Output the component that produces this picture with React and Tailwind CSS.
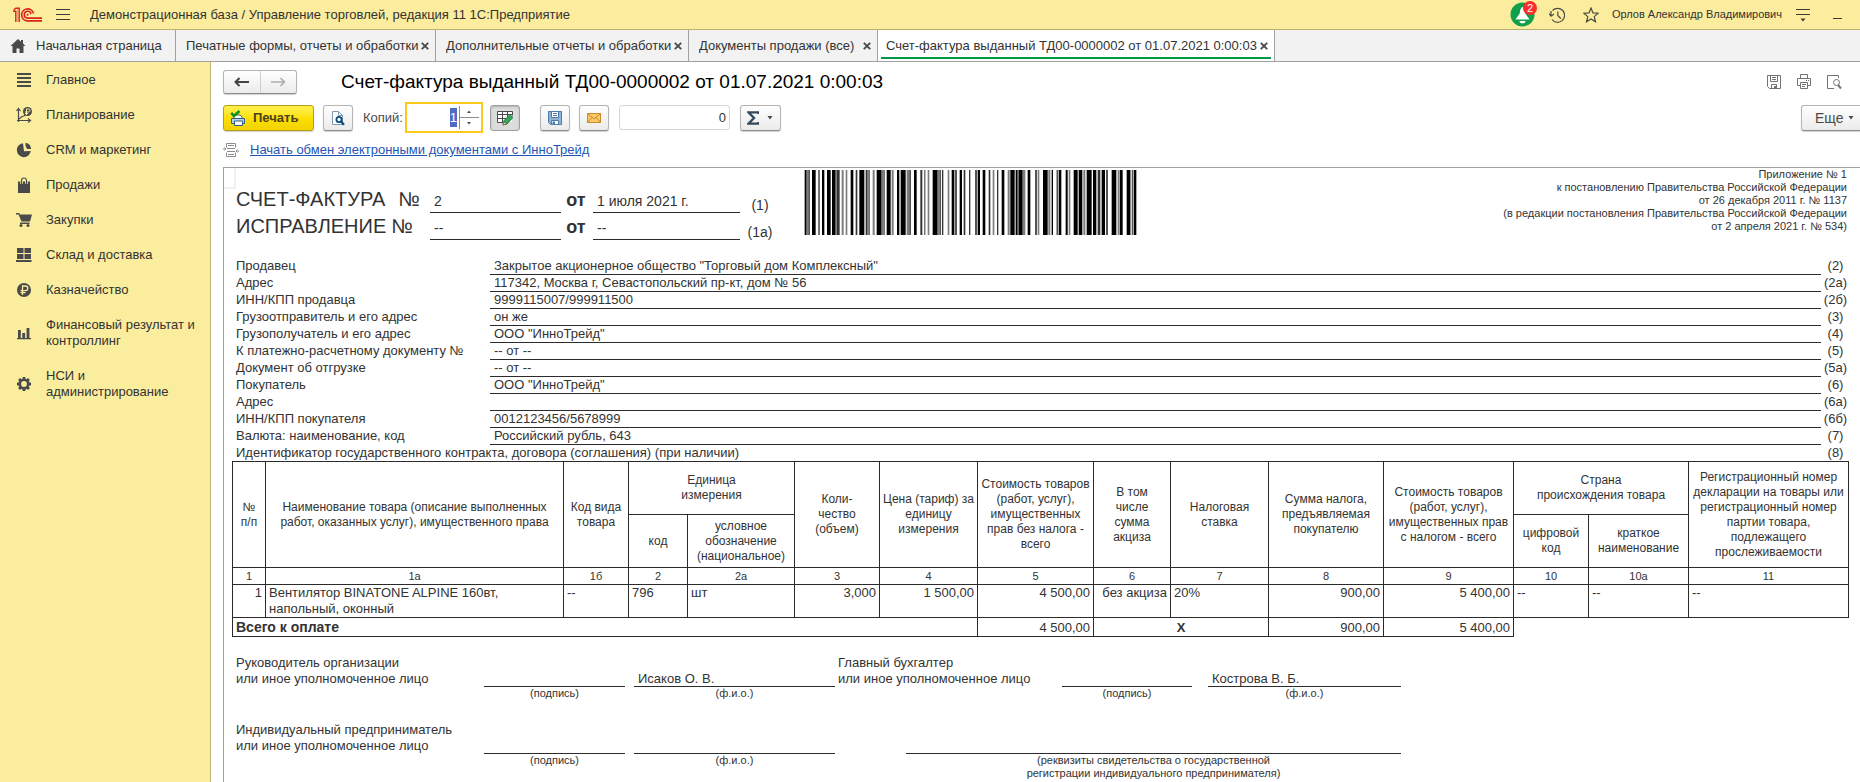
import { useEffect, useRef } from "react";

const TABS = [
  { title: "Печатные формы, отчеты и обработки", width: "w-[260px]" },
  { title: "Дополнительные отчеты и обработки", width: "w-[253px]" },
  { title: "Документы продажи (все)", width: "w-[189px]" },
  { title: "Счет-фактура выданный ТД00-0000002 от 01.07.2021 0:00:03", width: "w-[397px]", active: true },
];

const G = "#4a4a4a";

const SECTIONS = [
  {
    title: "Главное",
    icon: <path d="M1 1h14v2H1zM1 5h14v2H1zM1 9h14v2H1zM1 13h14v2H1z" fill={G} />,
  },
  {
    title: "Планирование",
    icon: (
      <g fill="none" stroke={G}>
        <path d="M2.500 15V2M0.500 4l2-2.500 2 2.500M1 13.500h13M12 11.500l2.500 2-2.500 2" strokeWidth="1.200" />
        <path d="M3 12l3-2.500 2-.500 2-2" strokeWidth="1.200" />
        <circle cx="11.500" cy="4.500" r="4.500" fill={G} stroke="none" />
        <path d="M10.500 8V2h2a1.400 1.400 0 0 1 0 3H9M9 6.500h3" stroke="#fbed9e" strokeWidth="1" />
      </g>
    ),
  },
  {
    title: "CRM и маркетинг",
    icon: (
      <g fill={G}>
        <path d="M7 1.200A7 7 0 1 0 14.800 9L8 9.200z" />
        <path d="M9.500 0.800v3l1.500 3.200h4A6.500 6.500 0 0 0 9.500 .8z" />
      </g>
    ),
  },
  {
    title: "Продажи",
    icon: (
      <g>
        <path d="M2 4.500h12V16H2z" fill={G} />
        <path d="M5.500 7V3.500a2.500 2.500 0 0 1 5 0V7" fill="none" stroke="#fbed9e" strokeWidth="2.600" />
        <path d="M5.500 7V3.500a2.500 2.500 0 0 1 5 0V7" fill="none" stroke={G} strokeWidth="1.100" />
      </g>
    ),
  },
  {
    title: "Закупки",
    icon: (
      <g fill={G}>
        <path d="M0 1h3.200l.6 1.500H16l-2 7H5.500L2.500 2.500H0z" />
        <path d="M4 10.500h9.500v1.500H4z" />
        <circle cx="5" cy="13.500" r="1.500" />
        <circle cx="12" cy="13.500" r="1.500" />
      </g>
    ),
  },
  {
    title: "Склад и доставка",
    icon: <path d="M1 1h6.500v5H1zM8.500 1H15v5H8.500zM1 7h6.500v5H1zM8.500 7H15v5H8.500zM0 13h15.500v2H0z" fill={G} />,
  },
  {
    title: "Казначейство",
    icon: (
      <g>
        <circle cx="8" cy="8" r="7" fill={G} />
        <path d="M6.500 13V4h3a2.200 2.200 0 0 1 0 4.600H4.500M4.500 10.700H9.500" fill="none" stroke="#fbed9e" strokeWidth="1.300" />
      </g>
    ),
  },
  {
    title: "Финансовый результат и контроллинг",
    icon: <path d="M1 13h14v1.300H1zM2 5h2.800v8H2zM6.300 8h2.800v5H6.300zM10.600 3h2.800v10h-2.800z" fill={G} />,
  },
  {
    title: "НСИ и администрирование",
    icon: (
      <g>
        <circle cx="8" cy="8" r="4.200" fill="none" stroke={G} strokeWidth="2.600" />
        <path
          d="M8 1v2.500M8 12.500V15M1 8h2.500M12.500 8H15M3.050 3.050l1.800 1.800M11.150 11.150l1.800 1.800M3.050 12.950l1.800-1.800M11.150 4.850l1.800-1.800"
          stroke={G}
          strokeWidth="2.800"
        />
      </g>
    ),
  },
];

const PARTIES = [
  ["Продавец", 'Закрытое акционерное общество "Торговый дом Комплексный"', "(2)"],
  ["Адрес", "117342, Москва г, Севастопольский пр-кт, дом № 56", "(2а)"],
  ["ИНН/КПП продавца", "9999115007/999911500", "(2б)"],
  ["Грузоотправитель и его адрес", "он же", "(3)"],
  ["Грузополучатель и его адрес", 'ООО "ИнноТрейд"', "(4)"],
  ["К платежно-расчетному документу №", "-- от --", "(5)"],
  ["Документ об отгрузке", "-- от --", "(5а)"],
  ["Покупатель", 'ООО "ИнноТрейд"', "(6)"],
  ["Адрес", "", "(6а)"],
  ["ИНН/КПП покупателя", "0012123456/5678999", "(6б)"],
  ["Валюта: наименование, код", "Российский рубль, 643", "(7)"],
];

const COLUMNS = [33, 298, 65, 59, 107, 85, 98, 116, 77, 98, 115, 130, 75, 100, 160];
const COLUMN_NUMBERS = ["1", "1а", "1б", "2", "2а", "3", "4", "5", "6", "7", "8", "9", "10", "10а", "11"];

const ITEM = [
  ["1", "text-right"],
  ["Вентилятор BINATONE ALPINE 160вт,\nнапольный, оконный", "text-left"],
  ["--", "text-left"],
  ["796", "text-left"],
  ["шт", "text-left"],
  ["3,000", "text-right"],
  ["1 500,00", "text-right"],
  ["4 500,00", "text-right"],
  ["без акциза", "text-right"],
  ["20%", "text-left"],
  ["900,00", "text-right"],
  ["5 400,00", "text-right"],
  ["--", "text-left"],
  ["--", "text-left"],
  ["--", "text-left"],
];

// [offset, width, shade] where shade 0 is black, 1 dark grey, 2 mid grey
const BARS = [
  [2, 6, 0], [8, 6, 2], [14, 3, 0], [24, 11, 0], [43, 4, 1], [54, 7, 0], [69, 11, 0], [84, 11, 0], [95, 4, 2], [99, 8, 1],
  [113, 6, 2], [125, 5, 2], [140, 8, 0], [155, 5, 1], [166, 15, 0], [185, 4, 1], [189, 5, 2], [194, 3, 1], [206, 6, 2],
  [218, 15, 0], [233, 7, 2], [240, 2, 1], [248, 12, 0], [263, 6, 2], [279, 7, 0], [290, 15, 0], [308, 9, 2], [317, 3, 0],
  [330, 8, 0], [349, 6, 1], [361, 3, 1], [371, 5, 2], [386, 15, 0], [401, 7, 2], [408, 2, 0], [414, 4, 1], [431, 5, 2],
  [443, 8, 0], [454, 4, 0], [467, 7, 0], [479, 5, 1], [495, 4, 1], [514, 4, 0], [521, 7, 0], [536, 8, 0], [554, 5, 1],
  [566, 5, 2], [579, 4, 1], [593, 8, 0], [611, 6, 2], [619, 13, 0], [635, 6, 0], [641, 3, 2], [644, 12, 0], [657, 7, 2],
  [671, 8, 0], [694, 4, 0], [701, 5, 2], [717, 14, 0], [733, 6, 2], [743, 4, 0], [758, 3, 0], [764, 8, 0], [785, 6, 0],
  [794, 5, 2], [809, 12, 0], [824, 11, 0], [838, 6, 2], [848, 15, 0], [867, 10, 0], [881, 8, 1], [893, 10, 0], [907, 4, 0],
  [923, 14, 0], [941, 6, 2], [948, 8, 0], [968, 11, 0], [979, 3, 2], [984, 2, 0], [989, 8, 0],
];
const SHADES = ["#000000", "#333333", "#7d7d7d"];

function Icon({ size = 16, box = 16, className = "", children }) {
  return (
    <svg width={size} height={size} viewBox={`0 0 ${box} ${box}`} className={`shrink-0 ${className}`} aria-hidden="true">
      {children}
    </svg>
  );
}

function TopBar() {
  return (
    <header className="flex h-[30px] shrink-0 items-center border-b border-[#b9b070] bg-[#fbec9e] pl-[13px] pr-[17px]">
      <svg width="30" height="16" viewBox="0 0 30 16" fill="none" stroke="#d9231d" className="shrink-0" aria-label="1С">
        <path d="M0 4.200H2.800V15M6.200 15V1.200H2.800L.8 3" strokeWidth="1.400" />
        <path d="M4.500 15V2.500" strokeWidth="1" opacity=".35" />
        <path d="M20.500 6.500A6 6 0 1 0 14.500 13.900H29" strokeWidth="1.600" />
        <path d="M18 7.200A3.400 3.400 0 1 0 14.500 11.100H29" strokeWidth="1.600" />
        <circle cx="14.600" cy="7.800" r="1" fill="#d9231d" stroke="none" />
      </svg>
      <button type="button" aria-label="Меню" className="ml-[13px] shrink-0">
        <svg width="15" height="11" viewBox="0 0 15 11" stroke="#3a3a3a" aria-hidden="true" className="block">
          <path d="M0 .5h14M0 5.500h14M0 10.500h14" />
        </svg>
      </button>
      <span className="ml-[19px] truncate text-[13px]">
        Демонстрационная база / Управление торговлей, редакция 11 1С:Предприятие
      </span>
      <div className="ml-auto flex shrink-0 items-center">
        <button type="button" aria-label="Уведомления: 2" className="relative">
          <Icon size={25} box={25}>
            <circle cx="12.500" cy="12.500" r="12" fill="#10a04c" />
            <path d="M12.500 5c-2 .5-2.300 3-2.800 6.500L5.500 17.500h14l-4.200-6C14.800 8 14.500 5.500 12.500 5z" fill="#fff" />
            <path d="M9.500 19h6a3 2.300 0 0 1-6 0z" fill="#fff" />
          </Icon>
          <span className="absolute -top-px left-[13px] flex h-[14px] w-[14px] items-center justify-center rounded-full bg-[#fb2c2c] text-[11px] leading-none text-white">
            2
          </span>
        </button>
        <button type="button" aria-label="История" className="ml-[14px]">
          <Icon>
            <g fill="none" stroke="#4a4a40" strokeWidth="1.200">
              <path d="M3.500 3.500A7 7 0 1 1 3 12.500" />
              <path d="M2 9L2 4M0 6.500L2 9.200 5 7M8.800 4.500v4l3 3" />
            </g>
          </Icon>
        </button>
        <button type="button" aria-label="Избранное" className="ml-[18px]">
          <Icon>
            <path d="M8 1l2 4.900 5.200.3-4 3.400 1.300 5.200L8 12l-4.500 2.800 1.300-5.200-4-3.400L6 5.900z" fill="none" stroke="#4a4a40" strokeWidth="1.200" />
          </Icon>
        </button>
        <span className="ml-[13px] text-[11px]">Орлов Александр Владимирович</span>
        <button type="button" aria-label="Сервис" className="ml-[14px]">
          <Icon size={15} box={15}>
            <path d="M0 2.500h14M0 7.500h14" stroke="#3a3a3a" />
            <path d="M4.500 11.500h5L7 14.500z" fill="#3a3a3a" />
          </Icon>
        </button>
        <button type="button" aria-label="Свернуть" className="ml-[22px]">
          <svg width="10" height="9" viewBox="0 0 10 9" aria-hidden="true">
            <path d="M0 8.500h9" stroke="#3a3a3a" />
          </svg>
        </button>
      </div>
    </header>
  );
}

function TabStrip() {
  return (
    <nav className="flex h-8 shrink-0 border-b border-[#a0a0a0] bg-[#f2f2f2]">
      <a href="#home" className="flex w-[176px] items-center gap-[10px] border-r border-[#a0a0a0] pl-[10px]">
        <Icon>
          <path d="M8 1L.5 8h2v7H6.500v-4.500h3V15h4V8h2L13 5.600V2h-2v1.700z" fill="#4a4a4a" />
        </Icon>
        <span className="text-[13px]">Начальная страница</span>
      </a>
      {TABS.map((tab) => (
        <div
          key={tab.title}
          className={`flex shrink-0 flex-col border-r border-[#a0a0a0] ${tab.width} ${tab.active ? "bg-white" : ""}`}
        >
          <div className={`flex flex-1 items-center justify-between pr-[6px] ${tab.active ? "pl-2 pt-1" : "pl-[10px]"}`}>
            <a href="#tab" className="truncate text-[13px]">{tab.title}</a>
            <button type="button" aria-label="Закрыть" className="shrink-0">
              <svg width="8" height="8" viewBox="0 0 8 8" aria-hidden="true">
                <path d="M.8.8l6.400 6.400M7.200.8L.8 7.200" stroke="#4a4a4a" strokeWidth="1.900" />
              </svg>
            </button>
          </div>
          {tab.active && <div className="mx-[3px] mb-[2px] h-[2px] bg-[#009a45]" />}
        </div>
      ))}
    </nav>
  );
}

function Sidebar() {
  return (
    <aside className="w-[211px] shrink-0 border-r border-[#c4b878] bg-[#fbed9e]">
      <ul>
        {SECTIONS.map((section) => (
          <li key={section.title}>
            <a href="#section" className="flex items-center gap-[14px] pb-[9px] pl-4 pr-[10px] pt-[10px] text-[13px] leading-4">
              <Icon>{section.icon}</Icon>
              <span>{section.title}</span>
            </a>
          </li>
        ))}
      </ul>
    </aside>
  );
}

const BTN =
  "flex shrink-0 items-center justify-center rounded-[3px] border border-[#b4b4b4] border-b-[#8c8c8c] bg-linear-to-b from-white to-[#ebebeb] shadow-[0_1px_1px_#d0d0d0]";

function CopiesInput() {
  const ref = useRef(null);
  useEffect(() => {
    ref.current.focus();
    ref.current.select();
  }, []);
  return (
    <div className="flex h-[31px] w-[78px] border-2 border-[#fbc81e] bg-white">
      <input
        id="copies"
        ref={ref}
        defaultValue="1"
        className="min-w-0 flex-1 pr-[2px] text-right text-[13px] outline-none selection:bg-[#4f6bc4] selection:text-white"
      />
      <div className="my-[2px] mr-[2px] flex w-5 flex-col border-l border-[#8c8c8c]">
        <button type="button" aria-label="Увеличить" className="flex flex-1 items-center justify-center border-b border-[#8c8c8c]">
          <svg width="4" height="3" viewBox="0 0 4 3" aria-hidden="true"><path d="M0 3L2 .5 4 3z" fill="#4a4a4a" /></svg>
        </button>
        <button type="button" aria-label="Уменьшить" className="flex flex-1 items-center justify-center">
          <svg width="4" height="3" viewBox="0 0 4 3" aria-hidden="true"><path d="M0 0L2 2.500 4 0z" fill="#4a4a4a" /></svg>
        </button>
      </div>
    </div>
  );
}

function Caret() {
  return (
    <svg width="6" height="4" viewBox="0 0 6 4" aria-hidden="true">
      <path d="M.5 0h5L3 3.500z" fill="#4a4a4a" />
    </svg>
  );
}

function FormHeader() {
  return (
    <div className="flex items-center pt-2">
      <div className={`${BTN} h-6 w-[74px]`}>
        <button type="button" aria-label="Назад" className="flex h-full flex-1 items-center justify-center border-r border-[#cfcfcf]">
          <svg width="15" height="10" viewBox="0 0 15 10" aria-hidden="true">
            <path d="M5.500 1L1.500 5l4 4M1.500 5H15" fill="none" stroke="#444" strokeWidth="2" />
          </svg>
        </button>
        <button type="button" aria-label="Вперед" className="flex h-full flex-1 items-center justify-center">
          <svg width="15" height="10" viewBox="0 0 15 10" aria-hidden="true">
            <path d="M9.500 1l4 4-4 4M13.500 5H0" fill="none" stroke="#adadad" strokeWidth="1.600" />
          </svg>
        </button>
      </div>
      <h1 className="ml-11 text-[19px] leading-6 text-black">Счет-фактура выданный ТД00-0000002 от 01.07.2021 0:00:03</h1>
      <div className="ml-auto flex shrink-0 gap-[14px] pr-[18px]">
        <button type="button" aria-label="Сохранить">
          <Icon>
            <path d="M1.500 1.500h13v13H3.500l-2-2zM4.500 1.500v6h7v-6M6 3.500h4M6 5.500h4M5.500 14.500v-4h5v4" fill="none" stroke="#737373" />
            <path d="M8 12h2.500v2.500H8z" fill="#737373" />
          </Icon>
        </button>
        <button type="button" aria-label="Печать">
          <Icon>
            <path d="M4.500 4.500V.5h7v4M4.500 11.500H1.500v-7h13v7h-3M4.500 8.500h7v6h-7zM6 10.500h4M6 12.500h3M10 6.500h1M12 6.500h1" fill="none" stroke="#737373" />
          </Icon>
        </button>
        <button type="button" aria-label="Просмотр">
          <Icon>
            <path d="M12.500 4V1.500h-11v13H8" fill="none" stroke="#737373" />
            <circle cx="10.500" cy="8.500" r="3" fill="none" stroke="#737373" />
            <path d="M12 11l3 3.500" stroke="#737373" strokeWidth="2" />
          </Icon>
        </button>
      </div>
    </div>
  );
}

function Toolbar() {
  return (
    <div className="flex items-center pt-2">
      <button
        type="button"
        className="flex h-[26px] w-[91px] shrink-0 items-center gap-[7px] rounded-[3px] border border-[#b79d10] bg-linear-to-b from-[#fff04a] via-[#fde000] to-[#f2d200] pl-[6px] text-[13px] font-bold text-[#4a4020] shadow-[0_1px_1px_#d0d0d0]"
      >
        <Icon>
          <path d="M4 8V5h6l2 2v3" fill="#fff" stroke="#2f6a94" />
          <path d="M1.500 8.500h13v5h-13z" fill="#b9cfdf" stroke="#2f5f85" />
          <path d="M4.500 11h8v4.500h-8z" fill="#fff" stroke="#2f5f85" />
          <path d="M1.200 2.800L4 6l5.500-5" fill="none" stroke="#0f8f1f" strokeWidth="2.600" />
        </Icon>
        Печать
      </button>
      <button type="button" aria-label="Предварительный просмотр" className={`${BTN} ml-[9px] h-[26px] w-[30px]`}>
        <Icon>
          <path d="M2.500 1.500h6l4 4v9h-10z" fill="#fff" stroke="#7d9ab5" />
          <path d="M8.500 1.500v4h4" fill="none" stroke="#7d9ab5" />
          <circle cx="9" cy="9.500" r="2.600" fill="#fff" stroke="#0f4b7a" strokeWidth="1.800" />
          <path d="M11 11.500l3 3.300" stroke="#0f4b7a" strokeWidth="2.400" />
        </Icon>
      </button>
      <label htmlFor="copies" className="ml-[10px] mr-[2px] text-[13px] text-[#4a4a4a]">Копий:</label>
      <CopiesInput />
      <button type="button" aria-label="Редактирование" className="ml-[7px] flex h-[26px] w-[30px] shrink-0 items-center justify-center rounded-[3px] border border-[#a0a0a0] bg-[#dcdcdc] shadow-[inset_0_1px_2px_#b0b0b0]">
        <Icon>
          <path d="M1 2h14v10H1z" fill="#fff" />
          <path d="M.5 1.500h15M.5 4.500h15M.5 8.500h9M.5 12.500h7M.5 1.500v11M5.500 1.500v11M10.500 1.500v6M15.500 1.500v4" fill="none" stroke="#4a4a4a" />
          <path d="M6 15l1-4.500L13 4.500l3 3L10 14z" fill="#35a35a" stroke="#1d6b38" strokeWidth=".8" />
          <path d="M6 15l.8-3.300L9.300 14z" fill="#f6d9a0" stroke="#6b4a1d" strokeWidth=".5" />
        </Icon>
      </button>
      <button type="button" aria-label="Сохранить как" className={`${BTN} ml-5 h-[26px] w-[30px]`}>
        <Icon>
          <path d="M1.500 1.500h13v13h-11l-2-2z" fill="#8fb4d6" stroke="#4d7ca8" />
          <path d="M4.500 1.500h7v6h-7z" fill="#fff" stroke="#4d7ca8" />
          <path d="M6 3.500h4M6 5.500h4" stroke="#4d7ca8" />
          <path d="M4.500 10.500h7v4h-7z" fill="#fff" stroke="#4d7ca8" />
          <path d="M5.500 11.500H8v3H5.500z" fill="#4d7ca8" />
        </Icon>
      </button>
      <button type="button" aria-label="Отправить" className={`${BTN} ml-[9px] h-[26px] w-[30px]`}>
        <Icon>
          <path d="M1.500 3.500h13v9h-13z" fill="#fbc968" stroke="#c98a2c" />
          <path d="M1.500 3.500L8 9l6.500-5.500M1.500 12.500L6 7.500M14.500 12.500L10 7.500" fill="none" stroke="#c98a2c" />
        </Icon>
      </button>
      <input
        aria-label="Сумма"
        defaultValue="0"
        className="ml-[10px] h-[25px] w-[111px] rounded-[3px] border border-[#d6d6d6] pr-[3px] text-right text-[13px]"
      />
      <button type="button" aria-label="Вычислить" className={`${BTN} ml-[10px] h-[26px] w-[41px] gap-[8px]`}>
        <svg width="12" height="14" viewBox="0 0 12 14" aria-hidden="true">
          <path d="M11.500 3V1.300H1.500L7 7l-5.500 5.700h10V11" fill="none" stroke="#34495c" strokeWidth="2.300" />
        </svg>
        <Caret />
      </button>
      <button
        type="button"
        className="ml-auto flex h-[26px] w-[59px] shrink-0 items-center gap-1 rounded-l-[3px] border border-r-0 border-[#b4b4b4] border-b-[#8c8c8c] bg-linear-to-b from-white to-[#ebebeb] pl-[13px] text-sm text-[#4a4a4a] shadow-[0_1px_1px_#d0d0d0]"
      >
        Еще
        <Caret />
      </button>
    </div>
  );
}

function InvoiceTitle() {
  const rows = [
    { name: "СЧЕТ-ФАКТУРА", gap: "gap-[13px]", number: "2", date: "1 июля 2021 г.", mark: "(1)", h: "h-[45px]" },
    { name: "ИСПРАВЛЕНИЕ", gap: "gap-[5px]", number: "--", date: "--", mark: "(1а)", h: "h-[27px]" },
  ];
  return (
    <div className="w-[580px] shrink-0 pl-3">
      {rows.map((row) => (
        <div key={row.name} className={`flex items-end ${row.h}`}>
          <div className={`flex w-[194px] pb-[2px] text-[20px] leading-6 ${row.gap}`}>
            <span>{row.name}</span>
            <span>№</span>
          </div>
          <div className="h-[22px] w-[131px] border-b border-[#2b2b2b] pl-1 text-sm leading-5">{row.number}</div>
          <div className="w-8 pb-[3px] pr-[2px] text-center text-lg font-bold leading-5">от</div>
          <div className="h-[22px] w-[147px] border-b border-[#2b2b2b] pl-1 text-sm leading-5">{row.date}</div>
          <div className="w-10 text-center text-sm leading-4">{row.mark}</div>
        </div>
      ))}
    </div>
  );
}

function Barcode() {
  return (
    <svg width="333" height="65" viewBox="0 0 999 195" className="mt-[2px] shrink-0" role="img" aria-label="Штрихкод">
      {BARS.map(([x, w, shade]) => (
        <rect key={x} x={x} y="0" width={w} height="195" fill={SHADES[shade]} />
      ))}
    </svg>
  );
}

function Parties() {
  return (
    <div className="pt-[18px]">
      {PARTIES.map(([label, value, mark]) => (
        <div key={mark} className="flex h-[17px] text-[13px] leading-4">
          <div className="w-[266px] shrink-0 pl-3">{label}</div>
          <div className="flex-1 border-b border-[#2b2b2b] pl-1">{value}</div>
          <div className="w-[39px] shrink-0 pr-[10px] text-center">{mark}</div>
        </div>
      ))}
      <div className="flex h-4 text-[13px] leading-4">
        <div className="flex-1 pl-3">Идентификатор государственного контракта, договора (соглашения) (при наличии)</div>
        <div className="w-[39px] shrink-0 pr-[10px] text-center">(8)</div>
      </div>
    </div>
  );
}

const CELL = "border-b border-r border-[#2b2b2b]";

function Head({ children, ...rest }) {
  return (
    <th {...rest} className={`${CELL} whitespace-pre-line p-0 text-xs font-normal leading-[15px]`}>
      {children}
    </th>
  );
}

function GoodsTable() {
  const total = COLUMNS.reduce((sum, w) => sum + w, 0);
  return (
    <div className="pl-2 pr-[11px]">
      <table className="w-full table-fixed border-separate border-spacing-0 border-l border-t border-[#2b2b2b]">
        <colgroup>
          {COLUMNS.map((w, i) => (
            <col key={i} style={{ width: `${(w / total) * 100}%` }} />
          ))}
        </colgroup>
        <thead>
          <tr className="h-[53px]">
            <Head rowSpan={2}>{"№\nп/п"}</Head>
            <Head rowSpan={2}>{"Наименование товара (описание выполненных\nработ, оказанных услуг), имущественного права"}</Head>
            <Head rowSpan={2}>{"Код вида\nтовара"}</Head>
            <Head colSpan={2}>{"Единица\nизмерения"}</Head>
            <Head rowSpan={2}>{"Коли-\nчество\n(объем)"}</Head>
            <Head rowSpan={2}>{"Цена (тариф) за\nединицу\nизмерения"}</Head>
            <Head rowSpan={2}>{"Стоимость товаров\n(работ, услуг),\nимущественных\nправ без налога -\nвсего"}</Head>
            <Head rowSpan={2}>{"В том\nчисле\nсумма\nакциза"}</Head>
            <Head rowSpan={2}>{"Налоговая\nставка"}</Head>
            <Head rowSpan={2}>{"Сумма налога,\nпредъявляемая\nпокупателю"}</Head>
            <Head rowSpan={2}>{"Стоимость товаров\n(работ, услуг),\nимущественных прав\nс налогом - всего"}</Head>
            <Head colSpan={2}>{"Страна\nпроисхождения товара"}</Head>
            <Head rowSpan={2}>{"Регистрационный номер\nдекларации на товары или\nрегистрационный номер\nпартии товара,\nподлежащего\nпрослеживаемости"}</Head>
          </tr>
          <tr className="h-[53px]">
            <Head>код</Head>
            <Head>{"условное\nобозначение\n(национальное)"}</Head>
            <Head>{"цифровой\nкод"}</Head>
            <Head>{"краткое\nнаименование"}</Head>
          </tr>
          <tr className="h-[17px]">
            {COLUMN_NUMBERS.map((n) => (
              <th key={n} className={`${CELL} p-0 text-[11px] font-normal leading-4`}>{n}</th>
            ))}
          </tr>
        </thead>
        <tbody className="text-[13px] leading-4">
          <tr className="h-[33px]">
            {ITEM.map(([text, align], i) => (
              <td key={i} className={`${CELL} whitespace-pre px-[3px] py-0 align-top ${align}`}>
                {text}
              </td>
            ))}
          </tr>
          <tr className="h-[19px]">
            <td colSpan={7} className={`${CELL} px-[3px] py-0 text-sm font-bold leading-[18px]`}>Всего к оплате</td>
            <td className={`${CELL} px-[3px] py-0 text-right align-bottom`}>4 500,00</td>
            <td colSpan={2} className={`${CELL} px-[3px] py-0 text-center align-bottom font-bold`}>X</td>
            <td className={`${CELL} px-[3px] py-0 text-right align-bottom`}>900,00</td>
            <td className={`${CELL} px-[3px] py-0 text-right align-bottom`}>5 400,00</td>
            <td colSpan={3} />
          </tr>
        </tbody>
      </table>
    </div>
  );
}

function SignLine({ value, caption, className }) {
  return (
    <div className={className}>
      <div className="h-8 border-b border-[#2b2b2b] pl-1 pt-4 text-[13px] leading-4">{value}</div>
      <div className="whitespace-pre-line text-center text-[11px] leading-[13px]">{caption}</div>
    </div>
  );
}

function Signatures() {
  return (
    <div className="flex flex-col gap-[22px] pl-3 pt-[18px] text-[13px] leading-4">
      <div className="flex items-start">
        <div className="w-[248px] whitespace-pre-line">{"Руководитель организации\nили иное уполномоченное лицо"}</div>
        <SignLine className="mr-[9px] w-[141px]" caption="(подпись)" />
        <SignLine className="mr-[3px] w-[201px]" value="Исаков О. В." caption="(ф.и.о.)" />
        <div className="w-[224px] whitespace-pre-line">{"Главный бухгалтер\nили иное уполномоченное лицо"}</div>
        <SignLine className="mr-4 w-[130px]" caption="(подпись)" />
        <SignLine className="w-[193px]" value="Кострова В. Б." caption="(ф.и.о.)" />
      </div>
      <div className="flex items-start">
        <div className="w-[248px] whitespace-pre-line">{"Индивидуальный предприниматель\nили иное уполномоченное лицо"}</div>
        <SignLine className="mr-[9px] w-[141px]" caption="(подпись)" />
        <SignLine className="mr-[71px] w-[201px]" caption="(ф.и.о.)" />
        <SignLine
          className="w-[495px]"
          caption={"(реквизиты свидетельства о государственной\nрегистрации индивидуального предпринимателя)"}
        />
      </div>
    </div>
  );
}

export default function App() {
  return (
    <div className="flex h-screen flex-col overflow-hidden bg-white font-['Liberation_Sans',Arial,sans-serif] text-[13px] text-[#333]">
      <TopBar />
      <TabStrip />
      <div className="flex min-h-0 flex-1">
        <Sidebar />
        <main className="flex min-w-0 flex-1 flex-col pl-3">
          <FormHeader />
          <Toolbar />
          <div className="flex h-[34px] shrink-0 items-center gap-[11px]">
            <Icon>
              <path d="M3.500 5.500v-4h9v4M5 3.500h6M3.500 10.500v4h9v-4M5 12.500h6M4 6.500h8M4 9.500h8" fill="none" stroke="#8c8c8c" />
              <path d="M0 7h3M1.500 5.500L3 7 1.500 8.500M16 9h-3M14.500 7.500L13 9l1.500 1.500" fill="none" stroke="#8c8c8c" />
            </Icon>
            <a href="#exchange" className="text-[13px] text-[#1f55b5] underline">
              Начать обмен электронными документами с ИнноТрейд
            </a>
          </div>
          <section className="relative min-h-0 flex-1 overflow-hidden border-l border-t border-[#a0a0a0]">
            <div className="absolute left-0 top-0 h-[21px] w-3 border-b-2 border-r-2 border-[#f0f0f0]" />
            <div className="flex">
              <InvoiceTitle />
              <Barcode />
              <p className="ml-auto whitespace-pre-line pr-[13px] text-right text-[11px] leading-[13px]">
                {
                  "Приложение № 1\nк постановлению Правительства Российской Федерации\nот 26 декабря 2011 г. № 1137\n(в редакции постановления Правительства Российской Федерации\nот 2 апреля 2021 г. № 534)"
                }
              </p>
            </div>
            <Parties />
            <GoodsTable />
            <Signatures />
          </section>
        </main>
      </div>
    </div>
  );
}
